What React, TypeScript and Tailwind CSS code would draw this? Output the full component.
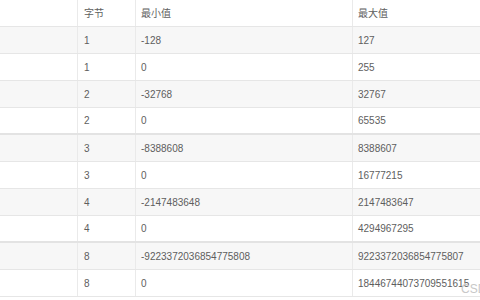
import React from "react";

const rows: { b: string; min: string; max: string; thick?: boolean }[] = [
  { b: "1", min: "-128", max: "127" },
  { b: "1", min: "0", max: "255" },
  { b: "2", min: "-32768", max: "32767" },
  { b: "2", min: "0", max: "65535", thick: true },
  { b: "3", min: "-8388608", max: "8388607" },
  { b: "3", min: "0", max: "16777215" },
  { b: "4", min: "-2147483648", max: "2147483647" },
  { b: "4", min: "0", max: "4294967295", thick: true },
  { b: "8", min: "-9223372036854775808", max: "9223372036854775807" },
  { b: "8", min: "0", max: "18446744073709551615" },
];

export default function App() {
  return (
    <div
      className="relative w-[480px] h-[300px] overflow-hidden bg-white text-[10px] text-[#5e5e5e]"
      style={{ fontFamily: '"Liberation Sans", Arial, "Noto Sans CJK SC", sans-serif' }}
    >
      <div className="w-[620px]">
        <div className="flex h-[27px] border-b border-[#e6e6e6] bg-white">
          <div className="w-[78px] border-r border-[#eaeaea]"></div>
          <div className="w-[58px] border-r border-[#eaeaea] pl-[6px] flex items-center">字节</div>
          <div className="w-[217px] border-r border-[#eaeaea] pl-[5px] flex items-center">最小值</div>
          <div className="flex-1 pl-[5px] flex items-center">最大值</div>
        </div>
        {rows.map((r, i) => (
          <div
            key={i}
            className={`flex h-[27px] ${r.thick ? "border-b-2 border-[#e3e3e3]" : "border-b border-[#e6e6e6]"} ${i % 2 === 0 ? "bg-[#f7f7f7]" : "bg-white"}`}
          >
            <div className="w-[78px] border-r border-[#eaeaea]"></div>
            <div className="w-[58px] border-r border-[#eaeaea] pl-[6px] flex items-center">{r.b}</div>
            <div className="w-[217px] border-r border-[#eaeaea] pl-[5px] flex items-center">{r.min}</div>
            <div className="flex-1 pl-[5px] flex items-center">{r.max}</div>
          </div>
        ))}
      </div>
      <div className="absolute left-[461px] top-[283px] text-[12px] text-[#c8c8c8] leading-none">CSDN</div>
    </div>
  );
}
